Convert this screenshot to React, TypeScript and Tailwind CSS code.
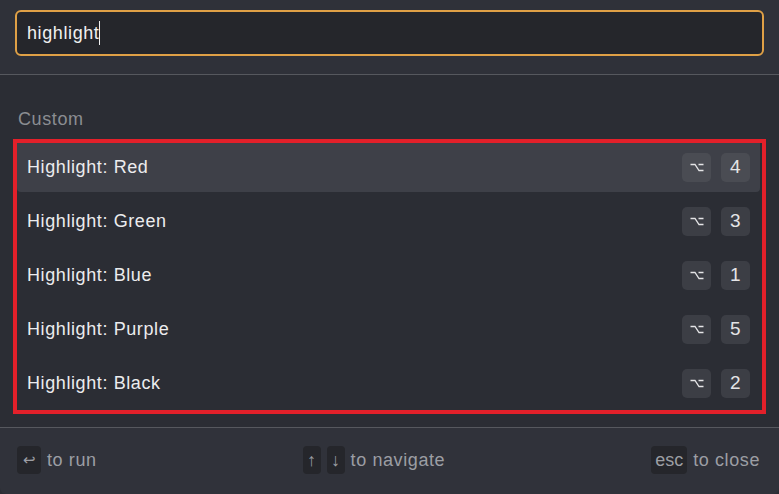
const items = [
  { name: 'Red', key: '4' },
  { name: 'Green', key: '3' },
  { name: 'Blue', key: '1' },
  { name: 'Purple', key: '5' },
  { name: 'Black', key: '2' },
]

function OptionIcon() {
  return (
    <svg width="14" height="9" viewBox="0 0 14 9" fill="none" stroke="currentColor" strokeWidth="1.3">
      <path d="M0.5 1.5 H5 L9 7.5 H13.5 M8.5 1.5 H13.5" />
    </svg>
  )
}

function Key({ children, active }: { children: React.ReactNode; active: boolean }) {
  return (
    <div
      className={`flex h-[29px] w-[29px] items-center justify-center rounded-[5px] text-[19px] text-[#e4e4e6] ${
        active ? 'bg-[#4a4c53]' : 'bg-[#3c3e45]'
      }`}
    >
      {children}
    </div>
  )
}

export default function App() {
  return (
    <div className="flex h-[494px] w-[779px] flex-col overflow-hidden bg-[#2b2d34] font-['Liberation_Sans',Arial,sans-serif] tracking-[0.6px]">
      <div className="bg-[#2f3139] px-[15px] pb-[18px] pt-[10px]">
        <div className="flex h-[46px] items-center rounded-[6px] border-2 border-[#dfa046] bg-[#25262b] pl-[10px] text-[18px] text-[#f0f0f0]">
          highlight<span className="h-[24px] w-px bg-[#f0f0f0]" />
        </div>
      </div>
      <div className="border-t border-[#56585e]" />

      <div className="px-[13px] pt-[34px]">
        <div className="pl-[5px] text-[18px] leading-[20px] text-[#8b8d92]">Custom</div>
        <div className="mt-[10px] flex h-[275px] flex-col gap-[5px] border-4 border-[#e3202a] pr-[2px]">
          {items.map((it, i) => (
            <div
              key={it.name}
              className={`flex h-[49px] items-center justify-between pl-[10px] pr-[10px] ${
                i === 0 ? 'rounded-b-[4px] bg-[#3e4048]' : ''
              }`}
            >
              <span className="pb-px text-[18px] text-[#ececee]">Highlight: {it.name}</span>
              <div className="flex gap-[10px]">
                <Key active={i === 0}>
                  <OptionIcon />
                </Key>
                <Key active={i === 0}>{it.key}</Key>
              </div>
            </div>
          ))}
        </div>
      </div>

      <div className="mt-[13px] border-t border-[#56585e]" />
      <div className="flex flex-1 items-center justify-between rounded-b-[6px] bg-[#30323a] pl-[17px] pr-[19px] pb-[2px] text-[18px] text-[#9c9ea4]">
        <div className="flex items-center gap-[6px]">
          <span className="flex h-[28px] w-[24px] items-center justify-center rounded-[4px] bg-[#25262b] text-[15px] tracking-normal">↩</span>
          <span>to run</span>
        </div>
        <div className="flex items-center gap-[6px]">
          <span className="flex h-[28px] w-[18px] items-center justify-center rounded-[4px] bg-[#25262b] tracking-normal">↑</span>
          <span className="flex h-[28px] w-[18px] items-center justify-center rounded-[4px] bg-[#25262b] tracking-normal">↓</span>
          <span>to navigate</span>
        </div>
        <div className="flex items-center gap-[6px]">
          <span className="flex h-[28px] w-[36px] items-center justify-center rounded-[4px] bg-[#25262b] tracking-normal">esc</span>
          <span>to close</span>
        </div>
      </div>
    </div>
  )
}
